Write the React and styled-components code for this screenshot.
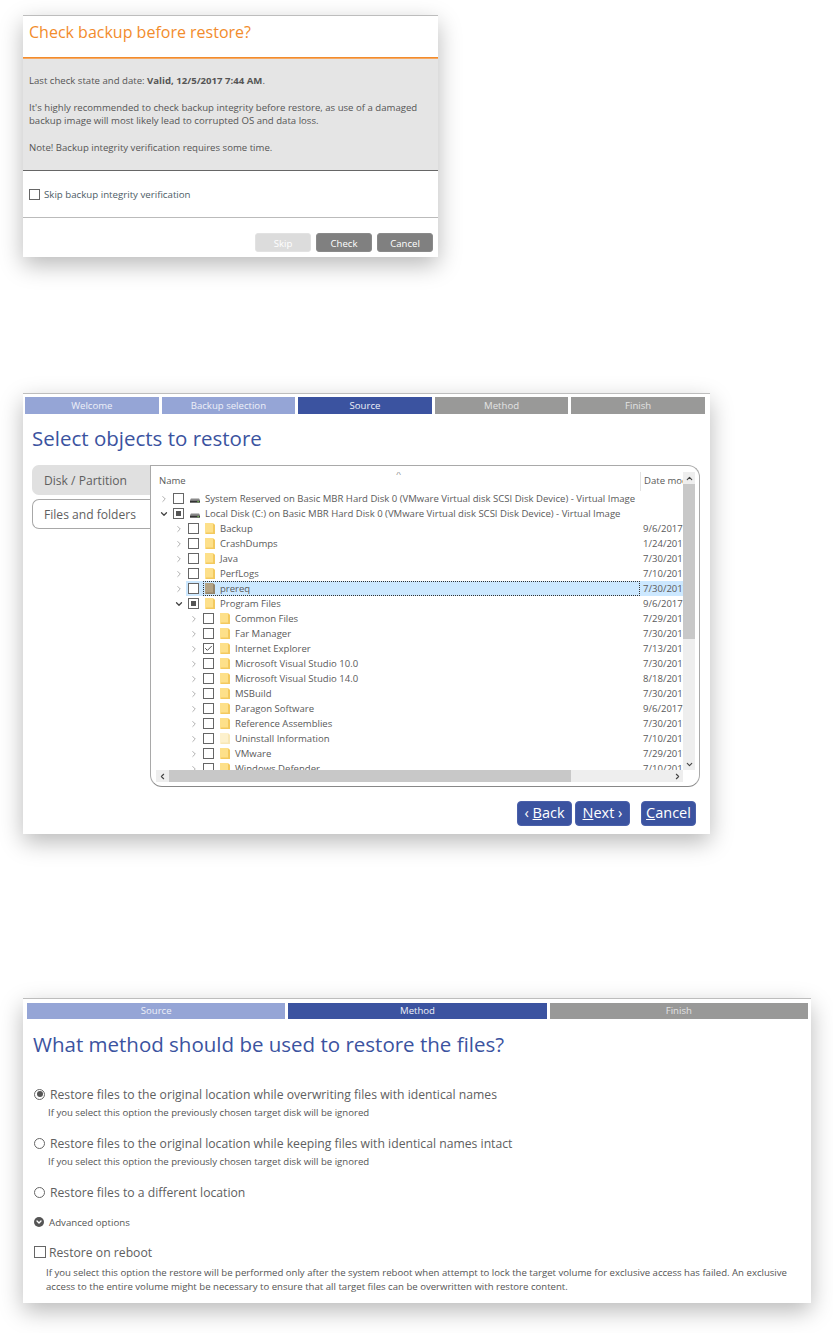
import React from 'react'
import styled, { createGlobalStyle } from 'styled-components'
import { ChevronRight, ChevronDown, ChevronUp, ChevronLeft, Check } from 'lucide-react'

const GlobalStyle = createGlobalStyle`
  html, body {
    margin: 0;
    background: #fff;
  }
  body {
    font-family: 'Open Sans', 'Liberation Sans', sans-serif;
    color: #5a5a5a;
  }
`

const Page = styled.div`
  padding: 15px 0 0 23px;
  height: 1333px;
  box-sizing: border-box;
  overflow: hidden;
`

const Win = styled.section`
  box-sizing: border-box;
  width: ${(p) => p.$w}px;
  height: ${(p) => p.$h}px;
  margin-top: ${(p) => p.$top || 0}px;
  background: #fff;
  border-top: 1px solid #bdbdbd;
  box-shadow: 0 8px 22px rgba(0, 0, 0, 0.28);
  display: flex;
  flex-direction: column;
`

/* dialog */
const DialogTitle = styled.h1`
  margin: 0;
  height: 42px;
  box-sizing: border-box;
  padding: 5px 0 0 6px;
  font-size: 16px;
  line-height: 22px;
  font-weight: 400;
  color: #f28c2c;
  border-bottom: 1px solid #f28c2c;
`
const DialogBody = styled.div`
  height: 113px;
  box-sizing: border-box;
  padding: 15px 6px 0;
  background: #e5e5e5;
  border-top: 1px solid #f6a862;
  border-bottom: 1px solid #666;
  font-size: 9.6px;
  line-height: 13px;
  color: #555;
  p {
    margin: 0 0 14px;
  }
  b {
    font-weight: 700;
  }
`
const SkipRow = styled.label`
  height: 47px;
  box-sizing: border-box;
  padding-left: 6px;
  display: flex;
  align-items: center;
  gap: 4px;
  font-size: 9.7px;
  color: #4d5c66;
  border-bottom: 1px solid #bbb;
`
const DialogFooter = styled.div`
  display: flex;
  justify-content: flex-end;
  gap: 5px;
  padding: 15px 5px 0 0;
`
const GrayButton = styled.button`
  width: 56px;
  height: 19px;
  padding: 1px 0 0;
  font: 9.6px 'Open Sans', sans-serif;
  color: #fff;
  border: 1px solid ${(p) => (p.disabled ? '#e2e2e2' : '#8a8a8a')};
  border-radius: 3px;
  background: ${(p) => (p.disabled ? '#dcdcdc' : '#808080')};
`

/* wizard */
const Steps = styled.div`
  display: flex;
  gap: 3px;
  padding: ${(p) => p.$pad};
`
const Step = styled.div`
  flex: 1;
  height: ${(p) => p.$h}px;
  line-height: ${(p) => p.$h}px;
  text-align: center;
  font-size: 9.6px;
  color: ${(p) => (p.$state === 'todo' ? '#e4e4e4' : '#eef0f8')};
  background: ${(p) =>
    p.$state === 'active' ? '#3b53a0' : p.$state === 'done' ? '#95a5d6' : '#999998'};
`
const PageTitle = styled.h2`
  margin: 0 0 ${(p) => p.$mb || 0}px;
  height: ${(p) => p.$h}px;
  line-height: ${(p) => p.$h}px;
  padding-left: ${(p) => p.$left}px;
  font-size: 20.5px;
  font-weight: 400;
  color: #3b53a0;
`
const Content = styled.div`
  display: flex;
  padding-left: 9px;
`
const Tabs = styled.div`
  width: 118px;
  flex: none;
  display: flex;
  flex-direction: column;
  gap: 4px;
`
const Tab = styled.div`
  height: 30px;
  box-sizing: border-box;
  line-height: 29px;
  padding-left: 11px;
  font-size: 12.1px;
  color: #5f5f5f;
  border-radius: 7px 0 0 7px;
  border: 1px solid ${(p) => (p.$active ? '#e0e0e0' : '#a8a8a8')};
  border-right: 0;
  background: ${(p) => (p.$active ? '#e0e0e0' : '#fff')};
`
const Panel = styled.div`
  width: 550px;
  height: 322px;
  box-sizing: border-box;
  border: 1px solid #a9a9a9;
  border-bottom-color: #888;
  border-radius: 0 12px 12px 12px;
  padding: 6px 4px 4px 5px;
  display: grid;
  grid-template-columns: 1fr 12px;
  grid-template-rows: 1fr 12px;
`
const Viewport = styled.div`
  overflow: hidden;
  font-size: 9.55px;
  color: #5a5a5a;
`
const HeaderRow = styled.div`
  position: relative;
  height: 19px;
  display: flex;
`
const SortCaret = styled.span`
  position: absolute;
  left: 240px;
  top: -3px;
  font-size: 9px;
  line-height: 9px;
  color: #888;
`
const HeaderName = styled.div`
  flex: 1;
  padding: 1px 0 0 3px;
  line-height: 15px;
`
const HeaderDate = styled.div`
  width: 43px;
  flex: none;
  box-sizing: border-box;
  padding: 1px 0 0 3px;
  line-height: 15px;
  white-space: nowrap;
  overflow: hidden;
  border-left: 1px solid #e2e2e2;
`
const Row = styled.div`
  height: 15px;
  display: flex;
  padding-left: ${(p) => p.$level * 15}px;
`
const Expander = styled.span`
  width: 15px;
  flex: none;
  display: flex;
  align-items: center;
  justify-content: center;
  color: ${(p) => (p.$open ? '#444' : '#a0a0a0')};
`
const RowBody = styled.div`
  flex: 1;
  min-width: 0;
  display: flex;
  align-items: center;
  padding-left: 2px;
  background: ${(p) => (p.$selected ? '#cce8ff' : 'transparent')};
`
const Box = styled.span`
  width: ${(p) => p.$size || 11}px;
  height: ${(p) => p.$size || 11}px;
  box-sizing: border-box;
  flex: none;
  display: flex;
  align-items: center;
  justify-content: center;
  border: 1px solid #666;
  background: #fff;
  color: #444;
  &::after {
    content: '';
    width: 5px;
    height: 5px;
    background: ${(p) => (p.$mixed ? '#555' : 'transparent')};
    display: ${(p) => (p.$mixed ? 'block' : 'none')};
  }
`
const NameCell = styled.div`
  flex: 1;
  min-width: 0;
  height: 15px;
  box-sizing: border-box;
  margin-left: 4px;
  padding-left: 1px;
  display: flex;
  align-items: center;
  gap: 5px;
  white-space: nowrap;
  border: 1px dotted ${(p) => (p.$selected ? '#333' : 'transparent')};
`
const DateCell = styled.div`
  width: 43px;
  flex: none;
  box-sizing: border-box;
  padding-left: 3px;
  overflow: hidden;
  white-space: nowrap;
  line-height: 15px;
`
const VScroll = styled.div`
  display: flex;
  flex-direction: column;
  background: #eeeeee;
`
const HScroll = styled.div`
  display: flex;
  background: #eeeeee;
  width: 527px;
`
const ArrowCell = styled.span`
  flex: none;
  display: flex;
  align-items: center;
  justify-content: center;
  width: 12px;
  height: 12px;
  color: #444;
  margin-top: ${(p) => (p.$end ? 'auto' : 0)};
  margin-left: ${(p) => (p.$endX ? 'auto' : 0)};
`
const Thumb = styled.div`
  background: #c8c8c8;
  flex: none;
  width: ${(p) => p.$w};
  height: ${(p) => p.$h};
  margin-left: ${(p) => p.$ml || 0}px;
`
const WizardFooter = styled.div`
  display: flex;
  justify-content: flex-end;
  padding: 14px 14px 0 0;
`
const BlueButton = styled.button`
  height: 25px;
  width: ${(p) => p.$w}px;
  margin-left: ${(p) => p.$ml || 0}px;
  padding: 0 0 2px;
  font: 14.5px 'Open Sans', sans-serif;
  color: #fff;
  background: #3b53a0;
  border: 1px solid #4a60aa;
  border-radius: 4px;
`

/* method page */
const Options = styled.div`
  padding: 15px 0 0 11px;
`
const Option = styled.div`
  margin-bottom: 13px;
`
const OptionLabel = styled.label`
  display: flex;
  align-items: center;
  gap: 5px;
  height: 18px;
  font-size: 12.2px;
  color: #606060;
`
const Radio = styled.span`
  width: 11px;
  height: 11px;
  box-sizing: border-box;
  flex: none;
  border-radius: 50%;
  border: 1px solid #666;
  display: flex;
  align-items: center;
  justify-content: center;
  &::after {
    content: '';
    width: 6px;
    height: 6px;
    border-radius: 50%;
    background: ${(p) => (p.$on ? '#555' : 'transparent')};
  }
`
const OptionHint = styled.div`
  height: 18px;
  line-height: 19px;
  padding-left: 14px;
  font-size: 9.6px;
  color: #555;
`
const AdvancedRow = styled.div`
  display: flex;
  align-items: center;
  gap: 5px;
  height: 14px;
  margin-top: 14px;
  font-size: 9.7px;
  color: #555;
`
const AdvancedDot = styled.span`
  width: 10px;
  height: 10px;
  border-radius: 50%;
  flex: none;
  background: #555;
  color: #fff;
  display: flex;
  align-items: center;
  justify-content: center;
`
const RebootLabel = styled(OptionLabel)`
  margin-top: 14px;
  gap: 3px;
`
const RebootText = styled.p`
  margin: 5px 0 0;
  padding-left: 12px;
  width: 745px;
  font-size: 9.6px;
  line-height: 14px;
  color: #555;
`

const Folder = ({ tone = 'normal' }) => {
  const fill = { normal: '#fde08a', pale: '#fdf1cd', tan: '#b3a283' }[tone]
  const edge = { normal: '#f3c95e', pale: '#f8e7b6', tan: '#93846a' }[tone]
  return (
    <svg width="10" height="11" viewBox="0 0 10 11" style={{ flex: 'none' }}>
      <path d="M0 0h8l2 2v9H0z" fill={fill} />
      <path d="M8 0.5V9.5H1v1.5H10V2z" fill={edge} />
    </svg>
  )
}

const Drive = () => (
  <svg width="10" height="12" viewBox="0 0 11 12" style={{ flex: 'none' }}>
    <path d="M1 5.5h9l1 2v2H0v-2z" fill="#8a8a8a" />
    <rect x="0" y="8" width="11" height="2" fill="#333" />
    <rect x="8" y="8.5" width="2" height="1" fill="#7fd05a" />
  </svg>
)

const treeRows = [
  { level: 0, name: 'System Reserved on Basic MBR Hard Disk 0 (VMware Virtual disk SCSI Disk Device) - Virtual Image', drive: true },
  { level: 0, name: 'Local Disk (C:) on Basic MBR Hard Disk 0 (VMware Virtual disk SCSI Disk Device) - Virtual Image', drive: true, open: true, mixed: true },
  { level: 1, name: 'Backup', date: '9/6/2017' },
  { level: 1, name: 'CrashDumps', date: '1/24/2017' },
  { level: 1, name: 'Java', date: '7/30/2017' },
  { level: 1, name: 'PerfLogs', date: '7/10/2017' },
  { level: 1, name: 'prereq', date: '7/30/2017', selected: true, tone: 'tan' },
  { level: 1, name: 'Program Files', date: '9/6/2017', open: true, mixed: true },
  { level: 2, name: 'Common Files', date: '7/29/2017' },
  { level: 2, name: 'Far Manager', date: '7/30/2017' },
  { level: 2, name: 'Internet Explorer', date: '7/13/2017', checked: true },
  { level: 2, name: 'Microsoft Visual Studio 10.0', date: '7/30/2017' },
  { level: 2, name: 'Microsoft Visual Studio 14.0', date: '8/18/2017' },
  { level: 2, name: 'MSBuild', date: '7/30/2017' },
  { level: 2, name: 'Paragon Software', date: '9/6/2017' },
  { level: 2, name: 'Reference Assemblies', date: '7/30/2017' },
  { level: 2, name: 'Uninstall Information', date: '7/10/2017', tone: 'pale' },
  { level: 2, name: 'VMware', date: '7/29/2017' },
  { level: 2, name: 'Windows Defender', date: '7/10/2017' },
]

const TreeRow = ({ row }) => (
  <Row $level={row.level}>
    <Expander $open={row.open}>
      {row.open ? <ChevronDown size={10} strokeWidth={3} /> : <ChevronRight size={10} strokeWidth={2} />}
    </Expander>
    <RowBody $selected={row.selected}>
      <Box $mixed={row.mixed}>{row.checked && <Check size={9} strokeWidth={2.5} />}</Box>
      <NameCell $selected={row.selected}>
        {row.drive ? <Drive /> : <Folder tone={row.tone} />}
        {row.name}
      </NameCell>
      <DateCell>{row.date}</DateCell>
    </RowBody>
  </Row>
)

const App = () => (
  <Page>
    <GlobalStyle />

    <Win $w={415} $h={242}>
      <DialogTitle>Check backup before restore?</DialogTitle>
      <DialogBody>
        <p>
          Last check state and date: <b>Valid, 12/5/2017 7:44 AM</b>.
        </p>
        <p>
          It's highly recommended to check backup integrity before restore, as use of a damaged
          <br />
          backup image will most likely lead to corrupted OS and data loss.
        </p>
        <p>Note! Backup integrity verification requires some time.</p>
      </DialogBody>
      <SkipRow>
        <Box />
        Skip backup integrity verification
      </SkipRow>
      <DialogFooter>
        <GrayButton disabled>Skip</GrayButton>
        <GrayButton>Check</GrayButton>
        <GrayButton>Cancel</GrayButton>
      </DialogFooter>
    </Win>

    <Win $w={687} $h={441} $top={136}>
      <Steps $pad="3px 5px 0 2px">
        <Step $h={17} $state="done">Welcome</Step>
        <Step $h={17} $state="done">Backup selection</Step>
        <Step $h={17} $state="active">Source</Step>
        <Step $h={17} $state="todo">Method</Step>
        <Step $h={17} $state="todo">Finish</Step>
      </Steps>
      <PageTitle $h={48} $mb={3} $left={9}>Select objects to restore</PageTitle>
      <Content>
        <Tabs>
          <Tab $active>Disk / Partition</Tab>
          <Tab>Files and folders</Tab>
        </Tabs>
        <Panel>
          <Viewport>
            <HeaderRow>
              <SortCaret>^</SortCaret>
              <HeaderName>Name</HeaderName>
              <HeaderDate>Date modified</HeaderDate>
            </HeaderRow>
            {treeRows.map((row) => (
              <TreeRow key={row.name} row={row} />
            ))}
          </Viewport>
          <VScroll>
            <ArrowCell><ChevronUp size={9} strokeWidth={3} /></ArrowCell>
            <Thumb $w="12px" $h="155px" />
            <ArrowCell $end><ChevronDown size={9} strokeWidth={3} /></ArrowCell>
          </VScroll>
          <HScroll>
            <ArrowCell><ChevronLeft size={9} strokeWidth={3} /></ArrowCell>
            <Thumb $w="402px" $h="12px" $ml={1} />
            <ArrowCell $endX><ChevronRight size={9} strokeWidth={3} /></ArrowCell>
          </HScroll>
        </Panel>
      </Content>
      <WizardFooter>
        <BlueButton $w={55}>‹ <u>B</u>ack</BlueButton>
        <BlueButton $w={55} $ml={3}><u>N</u>ext ›</BlueButton>
        <BlueButton $w={55} $ml={11}><u>C</u>ancel</BlueButton>
      </WizardFooter>
    </Win>

    <Win $w={788} $h={305} $top={164}>
      <Steps $pad="4px 3px 0 4px">
        <Step $h={16} $state="done">Source</Step>
        <Step $h={16} $state="active">Method</Step>
        <Step $h={16} $state="todo">Finish</Step>
      </Steps>
      <PageTitle $h={51} $left={10}>What method should be used to restore the files?</PageTitle>
      <Options>
        <Option>
          <OptionLabel><Radio $on />Restore files to the original location while overwriting files with identical names</OptionLabel>
          <OptionHint>If you select this option the previously chosen target disk will be ignored</OptionHint>
        </Option>
        <Option>
          <OptionLabel><Radio />Restore files to the original location while keeping files with identical names intact</OptionLabel>
          <OptionHint>If you select this option the previously chosen target disk will be ignored</OptionHint>
        </Option>
        <OptionLabel><Radio />Restore files to a different location</OptionLabel>
        <AdvancedRow>
          <AdvancedDot><ChevronDown size={8} strokeWidth={4} /></AdvancedDot>
          Advanced options
        </AdvancedRow>
        <RebootLabel><Box $size={12} />Restore on reboot</RebootLabel>
        <RebootText>
          If you select this option the restore will be performed only after the system reboot when attempt to lock the target volume for exclusive access has failed. An exclusive access to the entire volume might be necessary to ensure that all target files can be overwritten with restore content.
        </RebootText>
      </Options>
    </Win>
  </Page>
)

export default App
